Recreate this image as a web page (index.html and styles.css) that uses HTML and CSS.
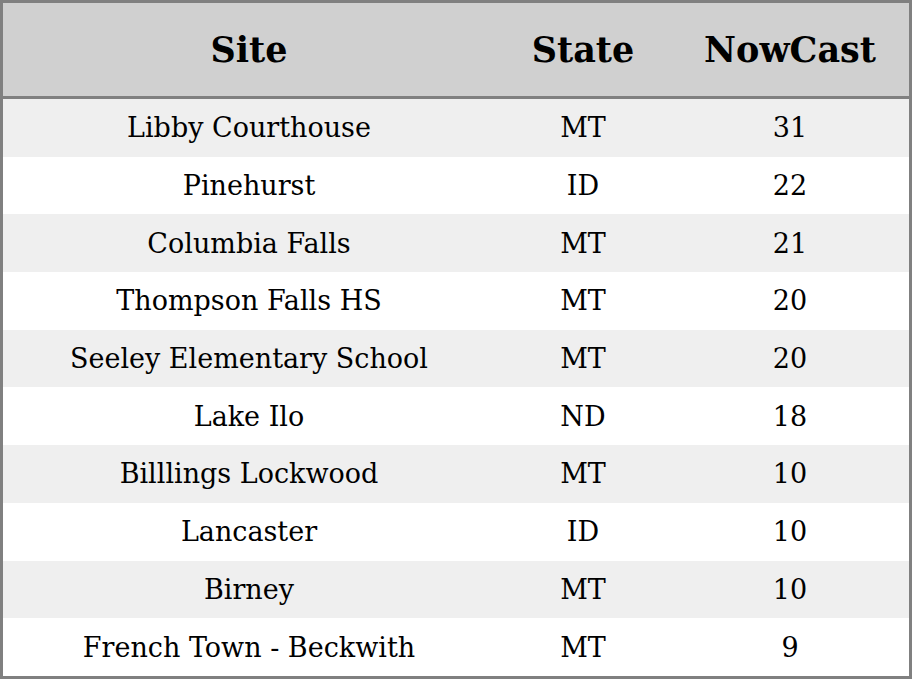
FILE: index.html
```html
<!DOCTYPE html>
<html>
<head>
<meta charset="utf-8">
<link rel="stylesheet" href="styles.css">
</head>
<body>
<table class="aq">
  <colgroup>
    <col class="c-site">
    <col class="c-state">
    <col class="c-now">
  </colgroup>
  <thead>
    <tr class="head-row"><th>Site</th><th>State</th><th>NowCast</th></tr>
  </thead>
  <tbody>
    <tr><td>Libby Courthouse</td><td>MT</td><td>31</td></tr>
    <tr><td>Pinehurst</td><td>ID</td><td>22</td></tr>
    <tr><td>Columbia Falls</td><td>MT</td><td>21</td></tr>
    <tr><td>Thompson Falls HS</td><td>MT</td><td>20</td></tr>
    <tr><td>Seeley Elementary School</td><td>MT</td><td>20</td></tr>
    <tr><td>Lake Ilo</td><td>ND</td><td>18</td></tr>
    <tr><td>Billlings Lockwood</td><td>MT</td><td>10</td></tr>
    <tr><td>Lancaster</td><td>ID</td><td>10</td></tr>
    <tr><td>Birney</td><td>MT</td><td>10</td></tr>
    <tr><td>French Town - Beckwith</td><td>MT</td><td>9</td></tr>
  </tbody>
</table>
</body>
</html>
```
FILE: styles.css
```css
html, body {
  margin: 0;
  padding: 0;
  background: #ffffff;
}
.aq {
  width: 912px;
  border-collapse: separate;
  border-spacing: 0;
  border: 3px solid #808080;
  font-family: "DejaVu Serif", serif;
  color: #000000;
  table-layout: fixed;
}
.c-site { width: 492px; }
.c-state { width: 176px; }
.c-now { width: 238px; }
.aq th {
  background: #d0d0d0;
  font-size: 35px;
  font-weight: bold;
  height: 93px;
  padding: 0;
  border-bottom: 3px solid #808080;
  text-align: center;
  vertical-align: middle;
}
.aq tbody tr {
  height: 57.7px;
}
.aq td {
  font-size: 27px;
  padding: 0;
  text-align: center;
  vertical-align: middle;
}
.aq tbody tr:nth-child(odd) td {
  background: #efefef;
}
```
